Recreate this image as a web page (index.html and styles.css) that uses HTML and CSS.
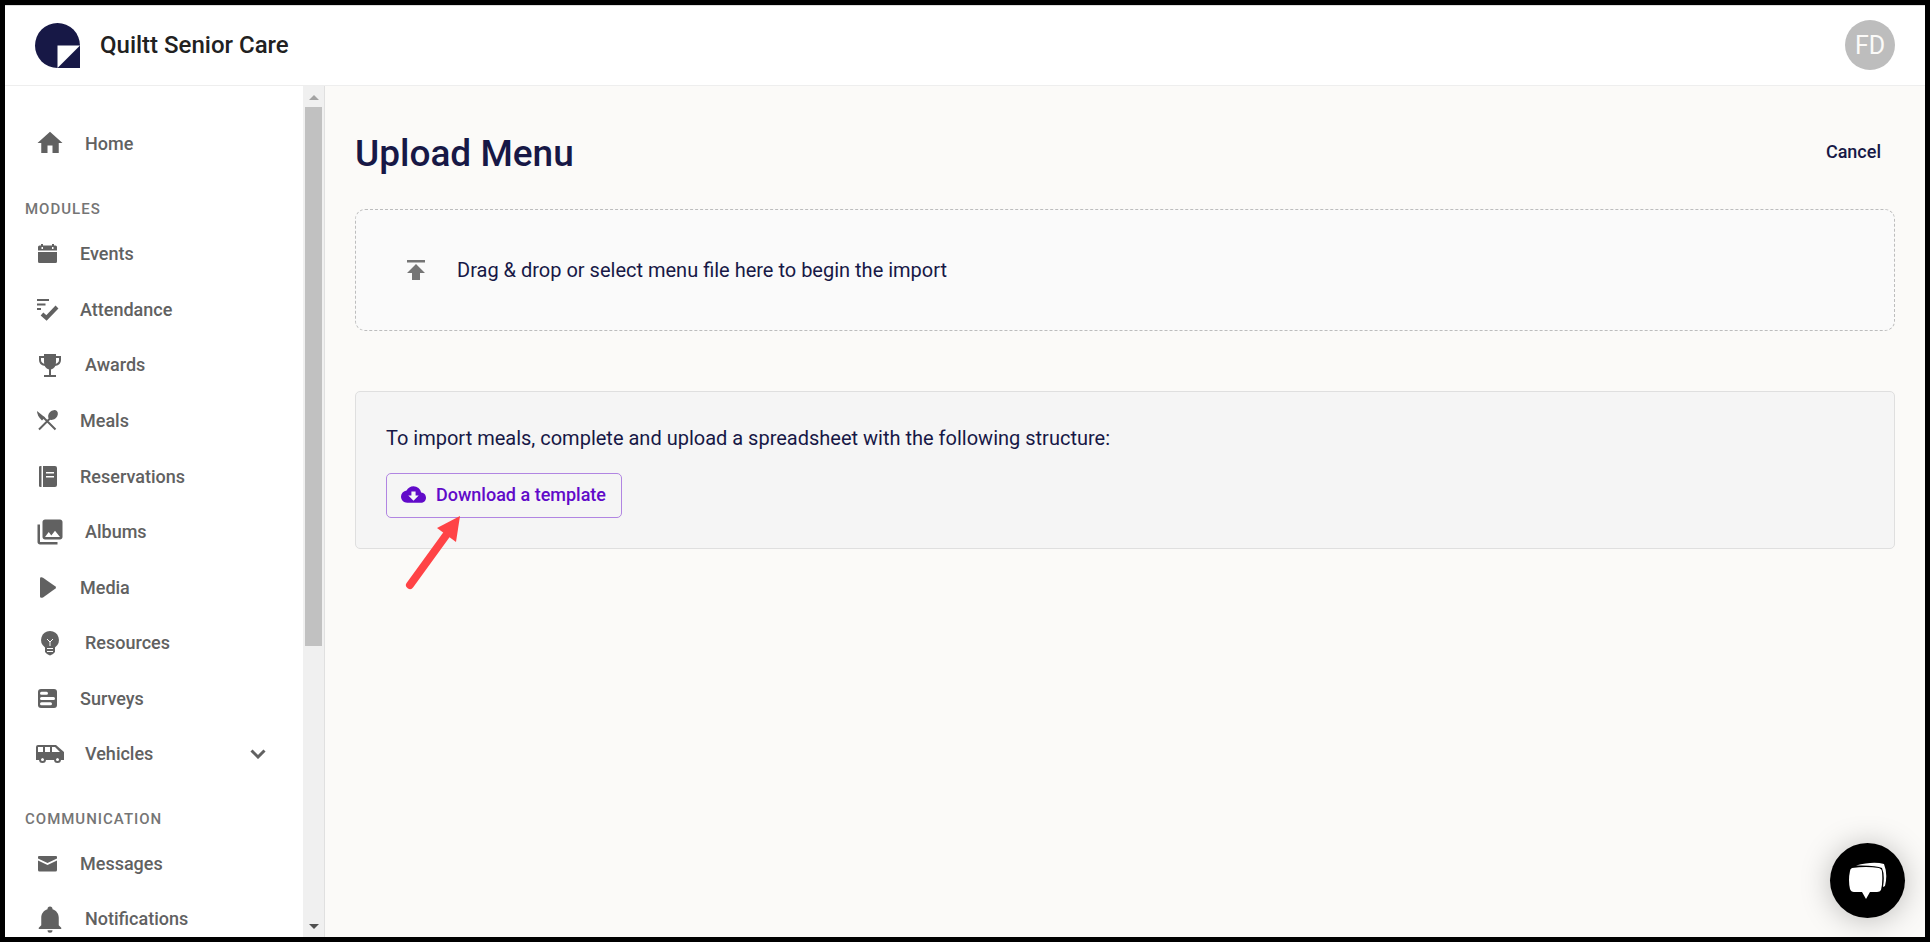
FILE: index.html
```html
<!DOCTYPE html>
<html lang="en">

<head>
    <meta charset="UTF-8" />
    <meta name="viewport" content="width=device-width, initial-scale=1.0" />
    <title>Upload Menu - Quiltt Senior Care</title>
    <link rel="stylesheet" href="styles.css">
</head>

<body>
    <header class="topbar">
        <a href="#" class="brand">
            <svg class="logo" viewBox="0 0 45 45" aria-hidden="true">
                <path d="M45 22.500A22.500 22.500 0 1 0 22.500 45H45z" fill="#171846" />
                <path d="M22.500 22.500H45L22.500 45z" fill="#fff" />
            </svg>
            <span>Quiltt Senior Care</span>
        </a>
        <button class="avatar" aria-label="Account">FD</button>
    </header>

    <div class="layout">
        <aside class="sidebar">
            <nav class="nav">
                <a href="#" class="nav-item">
                    <svg class="icon-lg" viewBox="0 0 24 24"><path d="M10 20v-6h4v6h5v-8h3L12 3 2 12h3v8z" /></svg>
                    <span>Home</span>
                </a>

                <h2 class="nav-title">Modules</h2>
                <a href="#" class="nav-item">
                    <svg class="icon" viewBox="0 0 25 25"><path d="M3 11h19v9.500q0 1.500-1.500 1.500h-16q-1.500 0-1.500-1.500zM3 9.500V6q0-1.500 1.500-1.500H6V3h2v1.500h9V3h2v1.500h1.500Q22 4.500 22 6v3.500zM6.500 6v2h1.500V6zM17 6v2h1.500V6z" fill-rule="evenodd" /></svg>
                    <span>Events</span>
                </a>
                <a href="#" class="nav-item">
                    <svg class="icon" viewBox="0 0 25 25"><path d="M2 3h12M2 7.500h8.500M2 12h4" class="line" /><path d="M7 17l4.500 4L22 10" class="line thick" /></svg>
                    <span>Attendance</span>
                </a>
                <a href="#" class="nav-item tight">
                    <svg class="icon-lg" viewBox="0 0 30 30"><path d="M9 4h12v8q0 6-5 7.500V25h5v2H9v-2h5v-5.500Q9 18 9 12z" /><path d="M9 7H5v3q0 4 5 5M21 7h4v3q0 4-5 5" class="line" /></svg>
                    <span>Awards</span>
                </a>
                <a href="#" class="nav-item">
                    <svg class="icon" viewBox="0 0 25 25"><path d="M2 3l8 6.500-3 3Q2 8 2 3z" /><ellipse cx="18" cy="7" rx="5.500" ry="4.200" transform="rotate(-45 18 7)" /><path d="M4 21.500L16 9.500M8 9l12.500 12.500" class="line" /></svg>
                    <span>Meals</span>
                </a>
                <a href="#" class="nav-item">
                    <svg class="icon" viewBox="0 0 25 25"><path d="M4 3q0-1 1.500-1H6.500v21H5.500Q4 23 4 22zM8 2h12q2 0 2 2v17q0 2-2 2H8zM11 8v1.500h8V8zM11 12v1.500h8V12z" fill-rule="evenodd" /></svg>
                    <span>Reservations</span>
                </a>
                <a href="#" class="nav-item tight">
                    <svg class="icon-lg" viewBox="0 0 24 24"><path d="M22 16V4c0-1.100-.9-2-2-2H8c-1.100 0-2 .9-2 2v12c0 1.100.9 2 2 2h12c1.100 0 2-.9 2-2zm-11-4l2.030 2.710L16 11l4 5H8l3-4zM2 6v14c0 1.100.9 2 2 2h14v-2H4V6H2z" /></svg>
                    <span>Albums</span>
                </a>
                <a href="#" class="nav-item">
                    <svg class="icon" viewBox="0 0 25 25"><path d="M5 3.500Q5 2 6.500 2.200L8 2.800 20.500 11.500q1 1 0 2L8 22.500q-3 1-3-1z" /></svg>
                    <span>Media</span>
                </a>
                <a href="#" class="nav-item tight">
                    <svg class="icon-lg" viewBox="0 0 30 30"><path d="M15 3a9 9 0 0 1 5 16.400V24l-2 2-3 1.500L12 26l-2-2v-4.600A9 9 0 0 1 15 3z" /><path d="M12 11l3 3 3-3M15 14v4M12 20.500h6M12 23.500h6" class="cut" /></svg>
                    <span>Resources</span>
                </a>
                <a href="#" class="nav-item">
                    <svg class="icon" viewBox="0 0 25 25"><rect x="3" y="3" width="19" height="19" rx="3" /><path d="M6.500 7.200h5M6.500 12.500h12M6.500 17.800h9" class="cut bar" /></svg>
                    <span>Surveys</span>
                </a>
                <a href="#" class="nav-item tight">
                    <svg class="icon-lg" viewBox="0 0 30 30"><path d="M3 6h18l8 7v8h-3a4 4 0 0 0-7 0h-8a4 4 0 0 0-7 0H1V8q0-2 2-2zM3 8v5h5V8zM10 8v5h5V8zM17 8v5h8l-5-5z" fill-rule="evenodd" /><circle cx="7.500" cy="20.500" r="2.500" class="line" /><circle cx="22.500" cy="20.500" r="2.500" class="line" /></svg>
                    <span>Vehicles</span>
                    <svg class="chevron" viewBox="0 0 16 10"><path d="M1.500 1.500L8 8l6.500-6.500" /></svg>
                </a>

                <h2 class="nav-title">Communication</h2>
                <a href="#" class="nav-item">
                    <svg class="icon" viewBox="0 0 25 25"><path d="M3 6q0-1 1-1h17q1 0 1 1v1.500L12.500 12 3 7.500zM3 9.500l9.500 4.500L22 9.500V19q0 1.500-1.500 1.500h-16Q3 20.500 3 19z" /></svg>
                    <span>Messages</span>
                </a>
                <a href="#" class="nav-item tight">
                    <svg class="icon-lg" viewBox="0 0 24 24"><path d="M21 19v1H3v-1l2-2v-6c0-3.100 2.030-5.830 5-6.710V4a2 2 0 0 1 4 0v.29c2.970.88 5 3.610 5 6.710v6l2 2zm-7 2a2 2 0 0 1-4 0" /></svg>
                    <span>Notifications</span>
                </a>
            </nav>
            <div class="scrollbar" aria-hidden="true">
                <span class="arrow-up"></span>
                <span class="thumb"></span>
                <span class="arrow-down"></span>
            </div>
        </aside>

        <main class="content">
            <div class="page-head">
                <h1>Upload Menu</h1>
                <button class="cancel">Cancel</button>
            </div>

            <label class="dropzone">
                <input type="file" class="file-input">
                <svg class="upload-icon" viewBox="0 0 18 20"><path d="M0 0h18v2.500H0zM9 4l9 9h-5v7H5v-7H0z" /></svg>
                <span>Drag &amp; drop or select menu file here to begin the import</span>
            </label>

            <section class="info">
                <p>To import meals, complete and upload a spreadsheet with the following structure:</p>
                <div class="download">
                    <button class="download-btn">
                        <svg class="cloud" viewBox="0 0 24 24"><path d="M19.350 10.040A7.490 7.490 0 0 0 12 4C9.110 4 6.600 5.640 5.350 8.040A5.994 5.994 0 0 0 0 14c0 3.310 2.690 6 6 6h13c2.760 0 5-2.240 5-5 0-2.640-2.050-4.780-4.650-4.960zM17 13l-5 5-5-5h3V9h4v4z" /></svg>
                        Download a template
                    </button>
                    <svg class="pointer" viewBox="0 0 56 76" aria-hidden="true">
                        <path d="M5 70L42 19" stroke="#ff4346" stroke-width="8" stroke-linecap="round" />
                        <path d="M55 1L51 27 32 13z" fill="#ff4346" />
                    </svg>
                </div>
            </section>
        </main>
    </div>

    <button class="chat" aria-label="Open chat">
        <svg viewBox="0 0 38 38"><path d="M7 3.500Q24-1 35 2q4 10 1 22l-2 1q2-12-1-19Q27 3 7 3.500z" /><path d="M3 6q14-2 27 0 3 1 3 4 1 10-1 18-1 2-4 2h-7l-4 7-4-7H5q-3 0-4-3-2-9 0-18 0-2 2-3z" /></svg>
    </button>
</body>

</html>
```

FILE: styles.css
```css
* {
    box-sizing: border-box;
}

body {
    margin: 0;
    height: 100vh;
    display: flex;
    flex-direction: column;
    border: 5px solid #000;
    background-color: #fbfaf8;
    color: #171846;
    font-family: Roboto, "Liberation Sans", sans-serif;
    font-size: 20px;
}

button {
    font-family: inherit;
    cursor: pointer;
}

a {
    color: inherit;
    text-decoration: none;
}

.topbar {
    display: flex;
    align-items: center;
    justify-content: space-between;
    flex: none;
    height: 81px;
    padding: 0 30px 1px;
    background-color: #fff;
    border-top: 1px solid #ddd;
    border-bottom: 1px solid #eee;
}

.brand {
    display: flex;
    align-items: center;
    gap: 20px;
    color: #212121;
    font-size: 24px;
    font-weight: 500;
}

.logo {
    width: 45px;
    height: 45px;
}

.avatar {
    width: 50px;
    height: 50px;
    padding: 0;
    border: none;
    border-radius: 50%;
    background-color: #bdbdbd;
    color: #fbfaf8;
    font-size: 25px;
}

.layout {
    display: flex;
    flex: 1;
    min-height: 0;
}

.sidebar {
    display: flex;
    flex: none;
    width: 320px;
    background-color: #fff;
    border-right: 1px solid #e0e0e0;
}

.nav {
    flex: 1;
    padding-top: 29px;
    overflow: hidden;
}

.nav-item {
    display: flex;
    align-items: center;
    gap: 20px;
    height: 56px;
    padding: 0 37px 0 30px;
    color: #616161;
    font-size: 18px;
    font-weight: 500;
}

.nav-item.tight {
    height: 55px;
}

.nav-title {
    margin: 28px 0 6px;
    padding-left: 20px;
    color: #757575;
    font-size: 15px;
    font-weight: 500;
    line-height: 20px;
    letter-spacing: 1px;
    text-transform: uppercase;
}

.icon {
    width: 25px;
    height: 25px;
    fill: #616161;
}

.icon-lg {
    width: 30px;
    height: 30px;
    fill: #616161;
}

.line {
    fill: none;
    stroke: #616161;
    stroke-width: 2;
}

.thick {
    stroke-width: 4;
}

.cut {
    fill: none;
    stroke: #fff;
    stroke-width: 1;
}

.bar {
    stroke-width: 3;
    stroke-linecap: round;
}

.chevron {
    width: 16px;
    height: 10px;
    margin-left: auto;
    fill: none;
    stroke: #616161;
    stroke-width: 3;
}

.scrollbar {
    display: flex;
    flex-direction: column;
    align-items: center;
    width: 21px;
    padding: 9px 0 8px;
    background-color: #f0f0f0;
}

.arrow-up,
.arrow-down {
    border: 5px solid transparent;
    border-top-width: 0;
    border-bottom: 5px solid #a3a3a3;
}

.arrow-down {
    margin-top: auto;
    border-top: 5px solid #505050;
    border-bottom-width: 0;
}

.thumb {
    width: 17px;
    height: 539px;
    margin-top: 7px;
    background-color: #c1c1c1;
}

.content {
    flex: 1;
    padding: 40px 30px;
}

.page-head {
    display: flex;
    align-items: center;
    justify-content: space-between;
    height: 54px;
    margin-bottom: 29px;
}

h1 {
    margin: 0;
    font-size: 37px;
    font-weight: 500;
}

.cancel {
    padding: 6px 14px 10px;
    border: none;
    background: none;
    color: #171846;
    font-size: 18px;
    font-weight: 500;
}

.dropzone {
    display: flex;
    align-items: center;
    gap: 32px;
    height: 122px;
    padding: 0 51px;
    border: 1px dashed #bdbdbd;
    border-radius: 10px;
    background-color: #fafafa;
    cursor: pointer;
}

.file-input {
    display: none;
}

.upload-icon {
    width: 18px;
    height: 20px;
    fill: #757575;
}

.info {
    margin-top: 60px;
    padding: 30px;
    border: 1px solid #dfdfdf;
    border-radius: 5px;
    background-color: #f5f5f5;
}

.info p {
    margin: 0 0 18px;
    line-height: 33px;
}

.download {
    position: relative;
    width: max-content;
}

.download-btn {
    display: flex;
    align-items: center;
    gap: 10px;
    height: 45px;
    padding: 0 15px 2px 14px;
    border: 1px solid #b185e2;
    border-radius: 5px;
    background: none;
    color: #610ac9;
    font-size: 18px;
    font-weight: 500;
}

.cloud {
    width: 25px;
    height: 25px;
    fill: #610ac9;
}

/* arrow pointing at the download button */
.pointer {
    position: absolute;
    top: 42px;
    left: 19px;
    width: 56px;
    height: 76px;
}

.chat {
    position: fixed;
    right: 25px;
    bottom: 24px;
    display: flex;
    align-items: center;
    justify-content: center;
    width: 75px;
    height: 75px;
    border: none;
    border-radius: 50%;
    background-color: #000;
    box-shadow: 0 2px 30px rgba(0, 0, 0, 0.25);
}

.chat svg {
    width: 38px;
    height: 38px;
    fill: #fff;
}
```
